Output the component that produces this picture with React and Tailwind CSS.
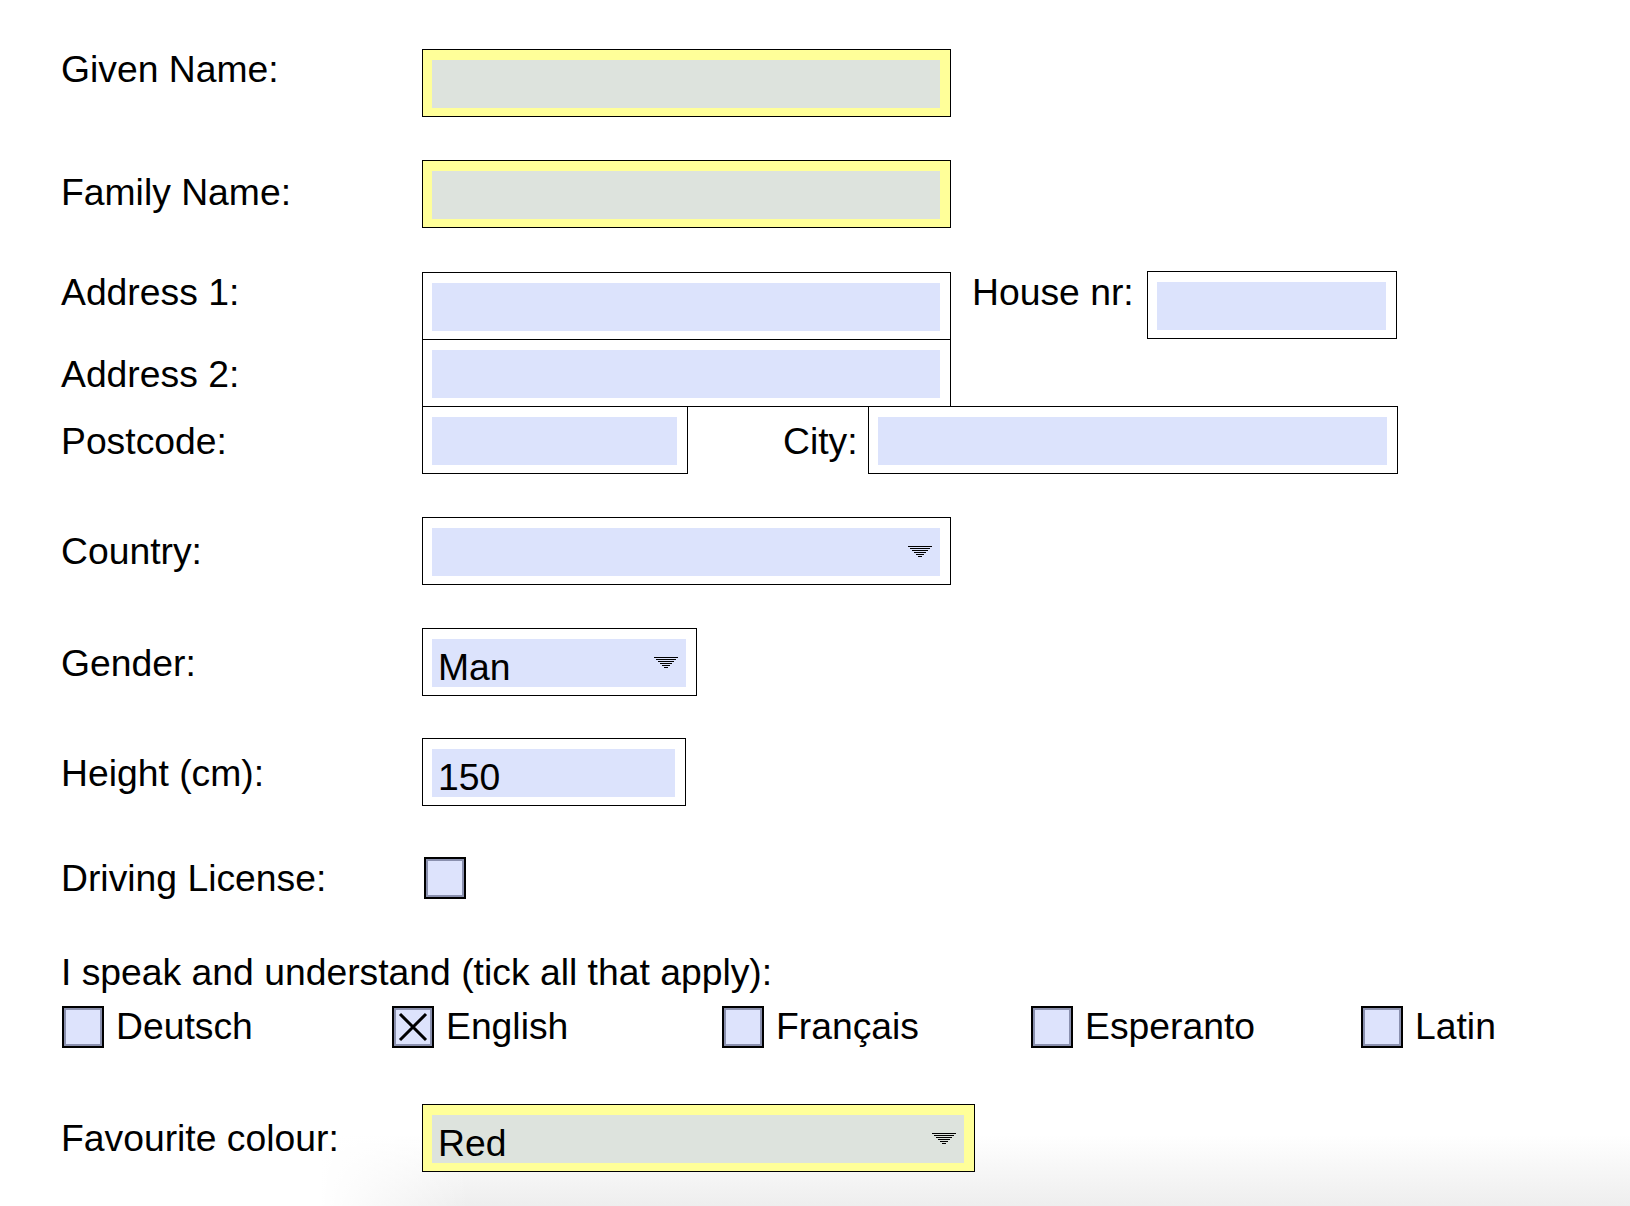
import React from 'react';

// hatched drop-down triangle used by the select fields
function Arrow() {
    return (
        <svg width="24" height="11" viewBox="0 0 24 11" className="mt-[18px] mr-[8px] shrink-0">
            <rect x="0" y="0" width="24" height="1" fill="#000" />
            <rect x="2" y="2" width="20" height="1" fill="#000" />
            <rect x="4" y="4" width="16" height="1" fill="#000" />
            <rect x="6" y="6" width="12" height="1" fill="#000" />
            <rect x="8" y="8" width="8" height="1" fill="#000" />
            <rect x="10" y="10" width="4" height="1" fill="#000" />
        </svg>
    );
}

function Field({ className = '', required = false, value = '', select = false }) {
    const outer = required ? 'bg-[#ffff99]' : 'bg-white';
    const inner = required ? 'bg-[#dde3dd]' : 'bg-[#dce3fc]';
    return (
        <div className={`shrink-0 border border-black pt-[10px] pb-[8px] pl-[9px] pr-[10px] ${outer} ${className}`}>
            <div className={`flex h-[48px] justify-between ${inner}`}>
                <span className="pt-[8px] pl-[6px]">{value}</span>
                {select && <Arrow />}
            </div>
        </div>
    );
}

function Checkbox({ checked = false }) {
    return (
        <div className="h-[42px] w-[42px] shrink-0 border-2 border-black">
            <div className="h-full w-full border-2 border-[#8a90ae] bg-[#dde3fc]">
                {checked && (
                    <svg width="34" height="34" viewBox="0 0 34 34" className="block">
                        <path d="M4 4 L30 30 M30 4 L4 30" stroke="#000" strokeWidth="3" />
                    </svg>
                )}
            </div>
        </div>
    );
}

function Label({ children, pad = 'pt-0' }) {
    return <div className={`w-[361px] shrink-0 ${pad}`}>{children}</div>;
}

export default function App() {
    const languages = [
        { name: 'Deutsch', width: 'w-[330px]' },
        { name: 'English', width: 'w-[330px]', checked: true },
        { name: 'Français', width: 'w-[309px]' },
        { name: 'Esperanto', width: 'w-[330px]' },
        { name: 'Latin', width: 'w-[200px]' },
    ];

    return (
        <div className="h-[1206px] overflow-hidden pl-[61px] text-[37.3px] leading-[41px] text-black font-['Liberation_Sans',Arial,sans-serif] bg-[linear-gradient(to_right,#fff_320px,rgba(255,255,255,0)_470px),linear-gradient(to_bottom,#fff_1135px,#eeeeee_1206px)]">
            <div className="mt-[49px] flex items-start">
                <Label>Given Name:</Label>
                <Field required className="w-[529px]" />
            </div>

            <div className="mt-[43px] flex items-start">
                <Label pad="pt-[12px]">Family Name:</Label>
                <Field required className="w-[529px]" />
            </div>

            <div className="mt-[44px] flex items-start">
                <Label>Address 1:</Label>
                <Field className="w-[529px]" />
                <span className="ml-[21px]">House nr:</span>
                <Field className="ml-[13px] -mt-px w-[250px]" />
            </div>

            <div className="-mt-px flex items-start">
                <Label pad="pt-[15px]">Address 2:</Label>
                <Field className="w-[529px]" />
            </div>

            <div className="-mt-px flex items-start">
                <Label pad="pt-[15px]">Postcode:</Label>
                <Field className="w-[266px]" />
                <span className="ml-[95px] pt-[15px]">City:</span>
                <Field className="ml-[10px] w-[530px]" />
            </div>

            <div className="mt-[43px] flex items-start">
                <Label pad="pt-[14px]">Country:</Label>
                <Field select className="w-[529px]" />
            </div>

            <div className="mt-[43px] flex items-start">
                <Label pad="pt-[15px]">Gender:</Label>
                <Field select value="Man" className="w-[275px]" />
            </div>

            <div className="mt-[42px] flex items-start">
                <Label pad="pt-[15px]">Height (cm):</Label>
                <Field value="150" className="w-[264px]" />
            </div>

            <div className="mt-[51px] flex items-start">
                <Label pad="pt-px">Driving License:</Label>
                <div className="ml-[2px]">
                    <Checkbox />
                </div>
            </div>

            <div className="mt-[53px]">I speak and understand (tick all that apply):</div>

            <div className="mt-[13px] flex items-start">
                {languages.map((lang) => (
                    <div key={lang.name} className={`flex shrink-0 items-start ${lang.width}`}>
                        <div className="ml-px">
                            <Checkbox checked={lang.checked} />
                        </div>
                        <span className="ml-[12px]">{lang.name}</span>
                    </div>
                ))}
            </div>

            <div className="mt-[56px] flex items-start">
                <Label pad="pt-[14px]">Favourite colour:</Label>
                <Field required select value="Red" className="w-[553px]" />
            </div>
        </div>
    );
}
